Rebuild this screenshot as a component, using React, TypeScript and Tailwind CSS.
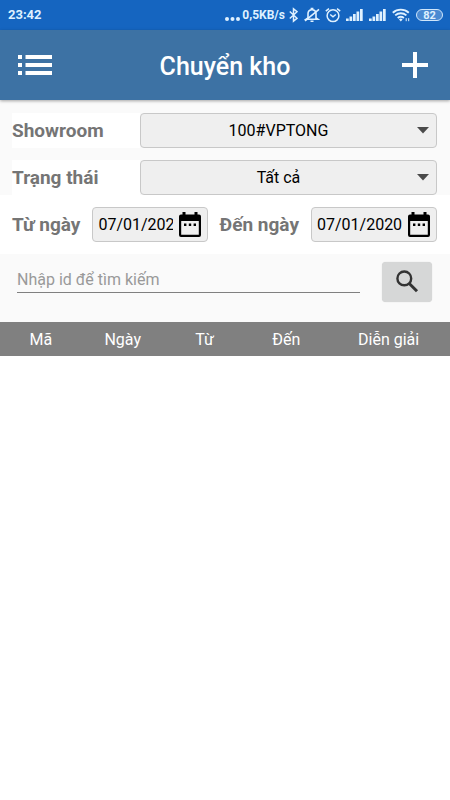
import React, { useState } from 'react';

const SHOWROOMS = ['100#VPTONG'];
const STATUSES = ['Tất cả'];
const COLUMNS = ['Mã', 'Ngày', 'Từ', 'Đến', 'Diễn giải'];

const SignalIcon = () => (
  <svg className="h-3 w-[17px]" viewBox="0 0 17 12" fill="currentColor">
    <rect x="0" y="9.5" width="2.7" height="2.5" />
    <rect x="3.5" y="7.5" width="2.7" height="4.5" />
    <rect x="7" y="5" width="2.7" height="7" />
    <rect x="10.5" y="2.5" width="2.7" height="9.5" />
    <rect x="14" y="0" width="2.7" height="12" />
  </svg>
);

const StatusBar = () => (
  <div className="flex h-[30px] items-center justify-between bg-[#1565c0] pl-2 pr-[7px] text-[#dff1ff]">
    <span className="text-[13px] font-bold">23:42</span>
    <div className="flex items-center">
      <svg className="mr-px mt-2 h-1 w-4" viewBox="0 0 16 4" fill="currentColor">
        <circle cx="2" cy="2" r="2" />
        <circle cx="7.5" cy="2" r="2" />
        <circle cx="13" cy="2" r="2" />
      </svg>
      <span className="text-xs font-bold">0,5KB/s</span>
      <svg className="ml-1 h-4 w-[9px]" viewBox="0 0 9 16" fill="none" stroke="currentColor" strokeWidth="1.5">
        <path d="M.8 4.5 8 11.3 4.5 14.2V1.8L8 4.7.8 11.5" />
      </svg>
      <svg className="ml-[6px] h-4 w-4" viewBox="0 0 16 16" fill="none" stroke="currentColor" strokeWidth="1.6">
        <path d="M4 11V7a4.2 4.2 0 0 1 3.4-4.2V1.6h1.2v1.2A4.2 4.2 0 0 1 12 7v4l1.7 1.2H2.3z" />
        <path d="M6.5 14.2h3M1 13.8 15 2.4" />
      </svg>
      <svg className="ml-[5px] h-4 w-4" viewBox="0 0 16 16" fill="none" stroke="currentColor" strokeWidth="1.5">
        <circle cx="8" cy="8.7" r="5.9" />
        <path d="m5.2 7.5 2.8 2.3 2.8-2.3M.8 4.2 4 1.6M15.2 4.2l-3.2-2.6" />
      </svg>
      <span className="ml-[5px] flex gap-[6px]">
        <SignalIcon />
        <SignalIcon />
      </span>
      <svg className="ml-[6px] h-[14px] w-[18px]" viewBox="0 0 18 14" fill="none" stroke="currentColor" strokeWidth="1.9">
        <path d="M.8 4.7a12 12 0 0 1 16 0M3.2 7.4a8.5 8.5 0 0 1 11.2 0M5.7 10a5 5 0 0 1 6.2 0" />
        <path d="m8.8 13.4-1.8-2a2.6 2.6 0 0 1 3.6 0z" fill="currentColor" stroke="none" />
        <path d="M14.2 10.2v3M16.7 10.2v3" strokeWidth="1" />
      </svg>
      <span className="ml-[6px] flex h-3 w-[27px] items-center justify-center rounded-full border border-[#cfe6fb] bg-[#4b8ad2] text-[11px] font-bold leading-none">
        82
      </span>
    </div>
  </div>
);

type SelectRowProps = {
  id: string;
  label: string;
  options: string[];
};

const SelectRow: React.FC<SelectRowProps> = ({ id, label, options }) => (
  <div className="flex items-center">
    <label htmlFor={id} className="w-32 shrink-0 bg-white text-[19px] leading-[35px] font-bold text-[#757575]">
      {label}
    </label>
    <div className="relative flex-1">
      <select
        id={id}
        className="block h-[35px] w-full appearance-none rounded border border-[#c8c8c8] bg-[#efefef] pl-1 pr-6 text-center text-base text-black"
      >
        {options.map((option) => (
          <option key={option}>{option}</option>
        ))}
      </select>
      <svg className="pointer-events-none absolute top-[14px] right-2 h-[7px] w-3" viewBox="0 0 12 7" fill="#4a4a4a">
        <path d="M0 0h12L6 6.5z" />
      </svg>
    </div>
  </div>
);

type DateFieldProps = {
  id: string;
  label: string;
  className: string;
};

const DateField: React.FC<DateFieldProps> = ({ id, label, className }) => {
  const [value, setValue] = useState('07/01/2020');

  return (
    <>
      <label htmlFor={id} className="shrink-0 text-[19px] leading-[35px] font-bold text-[#757575]">
        {label}
      </label>
      <div className={`flex h-[35px] min-w-0 items-center rounded border border-[#c8c8c8] bg-[#efefef] px-[5px] ${className}`}>
        <input
          id={id}
          type="text"
          value={value}
          onChange={(e) => setValue(e.target.value)}
          className="w-0 min-w-0 flex-1 bg-transparent text-base text-black outline-none"
        />
        <button type="button" aria-label={`Chọn ${label.toLowerCase()}`} className="ml-[5px] shrink-0">
          <svg className="block h-[26px] w-6" viewBox="0 0 24 26">
            <path
              d="M3 2.5h1.5V0h3v2.5h9V0h3v2.5H21a2 2 0 0 1 2 2v18.5a2 2 0 0 1-2 2H3a2 2 0 0 1-2-2V4.5a2 2 0 0 1 2-2zm.2 6.5v13.8h17.6V9z"
              fillRule="evenodd"
            />
            <path d="M6 11.5h2.4v2.4H6zM10.8 11.5h2.4v2.4h-2.4zM15.6 11.5H18v2.4h-2.4z" />
          </svg>
        </button>
      </div>
    </>
  );
};

export default function App() {
  const [query, setQuery] = useState('');

  return (
    <div className="min-h-screen bg-white font-[Roboto,sans-serif]">
      <StatusBar />

      {/* Title bar */}
      <header className="relative flex h-[70px] items-center justify-between bg-[#3d72a4] px-[18px] text-white shadow-[0_1px_3px_rgba(0,0,0,0.35)]">
        <button type="button" aria-label="Menu">
          <svg className="block h-5 w-[34px]" viewBox="0 0 34 20" fill="currentColor">
            <path d="M0 0h4v4H0zM7.5 0H34v4H7.5zM0 8h4v4H0zM7.5 8H34v4H7.5zM0 16h4v4H0zM7.5 16H34v4H7.5z" />
          </svg>
        </button>
        <h1 className="pt-1 pr-1 text-[25px] font-medium">Chuyển kho</h1>
        <button type="button" aria-label="Thêm" className="mr-1">
          <svg className="block h-[26px] w-[26px]" viewBox="0 0 26 26" fill="currentColor">
            <path d="M11 0h4v11h11v4H15v11h-4V15H0v-4h11z" />
          </svg>
        </button>
      </header>

      {/* Filters */}
      <div className="flex flex-col gap-3 bg-[#fafafa] pt-[13px] pr-[13px] pl-3">
        <SelectRow id="showroom" label="Showroom" options={SHOWROOMS} />
        <SelectRow id="status" label="Trạng thái" options={STATUSES} />
      </div>
      <div className="flex items-center gap-3 pt-3 pr-[13px] pb-3 pl-3">
        <DateField id="from" label="Từ ngày" className="flex-[19]" />
        <DateField id="to" label="Đến ngày" className="flex-[21]" />
      </div>

      {/* Search */}
      <form
        className="flex items-start bg-[#fafafa] pt-2 pr-[18px] pb-5 pl-[17px]"
        onSubmit={(e) => e.preventDefault()}
      >
        <input
          type="text"
          aria-label="Nhập id để tìm kiếm"
          placeholder="Nhập id để tìm kiếm"
          value={query}
          onChange={(e) => setQuery(e.target.value)}
          className="h-[31px] min-w-0 flex-1 border-b border-[#808080] pt-1 text-base text-black outline-none placeholder:text-[#999]"
        />
        <button
          type="submit"
          aria-label="Tìm"
          className="ml-[22px] flex h-10 w-[50px] items-center justify-center rounded-sm bg-[#d6d7d7] shadow-[0_0_1px_rgba(0,0,0,0.2)]"
        >
          <svg className="h-6 w-6" viewBox="0 0 24 24" fill="none" stroke="#333" strokeWidth="2.4">
            <circle cx="9.3" cy="8.4" r="6.9" />
            <path d="m14 13.2 8 8" strokeWidth="3" />
          </svg>
        </button>
      </form>

      {/* Transfer list */}
      <table className="w-full table-fixed bg-[#808080] text-base text-white">
        <colgroup>
          <col span={4} className="w-2/11" />
          <col />
        </colgroup>
        <thead>
          <tr className="h-[34px]">
            {COLUMNS.map((column) => (
              <th key={column} scope="col" className="px-0 pt-[2px] pb-0 font-normal">
                {column}
              </th>
            ))}
          </tr>
        </thead>
        <tbody></tbody>
      </table>
    </div>
  );
}
